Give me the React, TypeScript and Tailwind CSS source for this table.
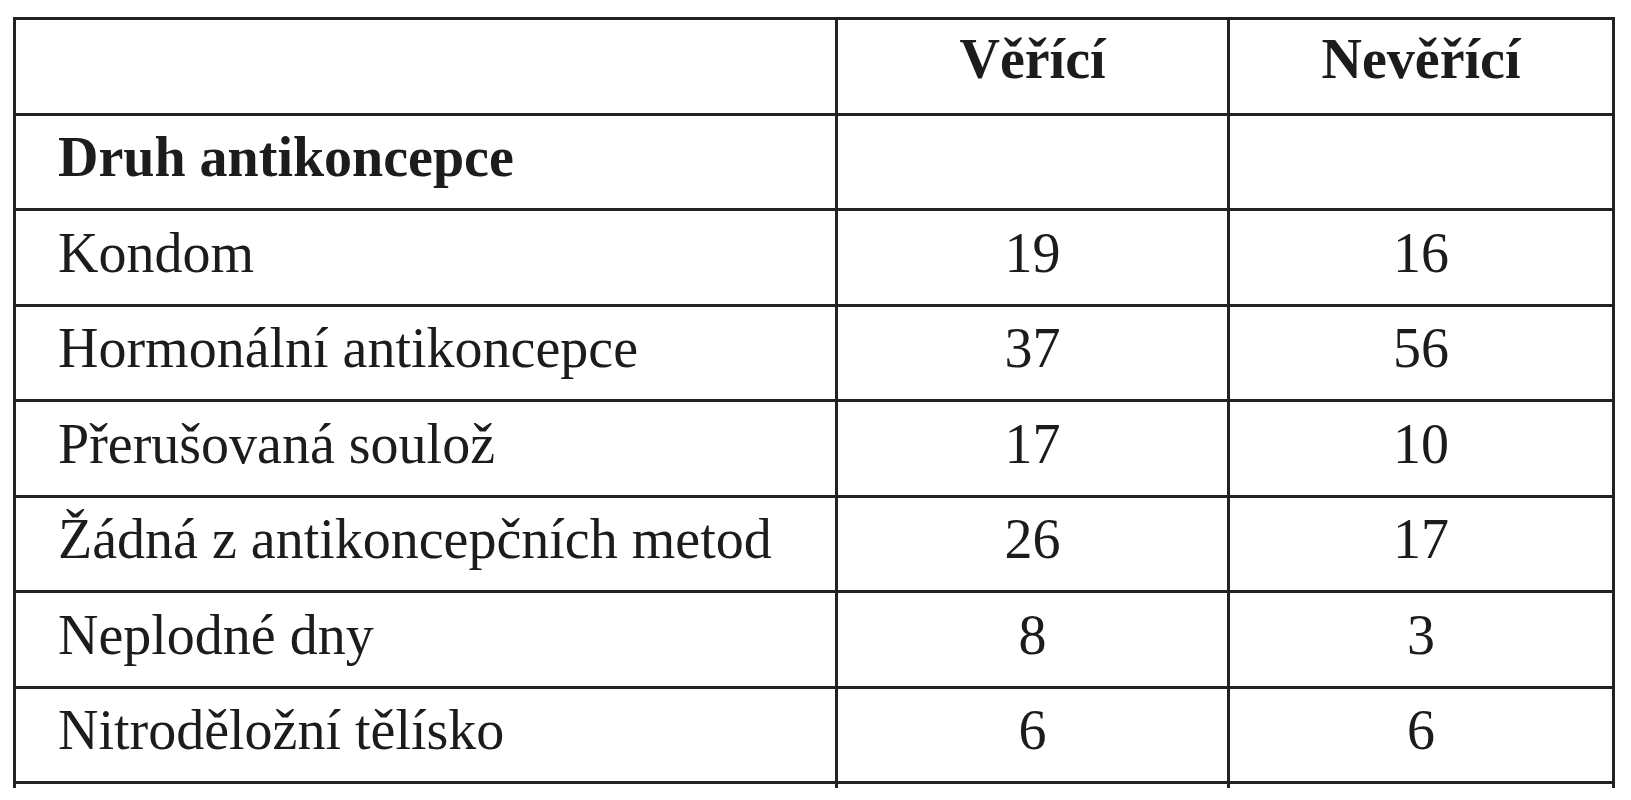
import React from "react";

const rows: [string, string, string][] = [
  ["Kondom", "19", "16"],
  ["Hormonální antikoncepce", "37", "56"],
  ["Přerušovaná soulož", "17", "10"],
  ["Žádná z antikoncepčních metod", "26", "17"],
  ["Neplodné dny", "8", "3"],
  ["Nitroděložní tělísko", "6", "6"],
];

const cell = "bg-white h-[92.5px] flex items-center pb-[9px]";
const head = "bg-white h-[92.5px] flex items-center pb-[14px]";

export default function App() {
  return (
    <div className="w-[1631px] h-[800px] bg-white pt-[17px] pl-[13px] text-[#1c1c1c] text-[56px] leading-none font-['Liberation_Serif','Times_New_Roman',serif]">
      <div className="inline-grid grid-cols-[819px_389px_382px] gap-[3px] bg-[#222] pt-[3px] px-[3px]">
        {/* header */}
        <div className={head} />
        <div className={`${head} justify-center font-bold`}>Věřící</div>
        <div className={`${head} justify-center font-bold`}>Nevěřící</div>

        <div className={`${cell} pl-[42px] font-bold`}>Druh antikoncepce</div>
        <div className={cell} />
        <div className={cell} />

        {rows.map(([label, a, b]) => (
          <React.Fragment key={label}>
            <div className={`${cell} pl-[42px]`}>{label}</div>
            <div className={`${cell} justify-center`}>{a}</div>
            <div className={`${cell} justify-center`}>{b}</div>
          </React.Fragment>
        ))}

        {/* stubs of the column lines under the bottom rule */}
        <div className="bg-white h-[4px]" />
        <div className="bg-white h-[4px]" />
        <div className="bg-white h-[4px]" />
      </div>
    </div>
  );
}
